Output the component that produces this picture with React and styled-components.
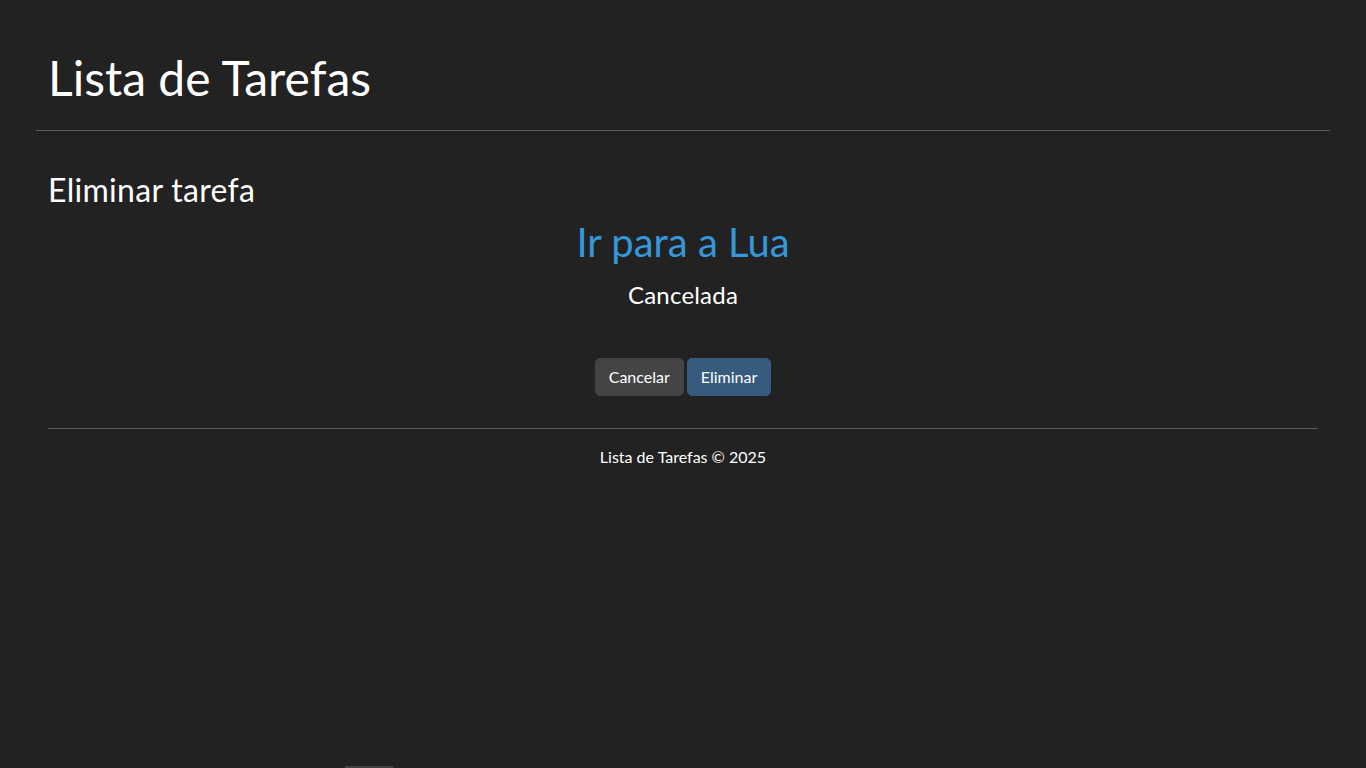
import React from 'react'
import styled, { createGlobalStyle } from 'styled-components'

const GlobalStyle = createGlobalStyle`
  html, body {
    margin: 0;
    padding: 0;
    background: #222222;
    color: #ffffff;
    font-family: Lato, "Liberation Sans", sans-serif;
    font-size: 16px;
    line-height: 1.5;
  }
  * { box-sizing: border-box; }
`

const Page = styled.div`
  min-height: 768px;
  padding: 0 36px;
`

const Header = styled.header`
  padding: 49px 12px 23px;
  border-bottom: 1px solid #5a5a5a;
`

const Title = styled.h1`
  margin: 0;
  font-size: 48px;
  font-weight: 400;
  line-height: 1.2;
`

const Main = styled.main`
  padding: 0 12px;
`

const SectionTitle = styled.h2`
  margin: 40px 0 0;
  font-size: 32px;
  font-weight: 400;
  line-height: 1.2;
  letter-spacing: 0.3px;
`

const Task = styled.div`
  text-align: center;
`

const TaskName = styled.h1`
  margin: 9px 0 0;
  font-size: 40px;
  font-weight: 400;
  line-height: 1.2;
  color: #3498db;
`

const TaskStatus = styled.h4`
  margin: 15px 0 0;
  font-size: 24px;
  font-weight: 400;
  line-height: 1.2;
  letter-spacing: 0.2px;
`

const Actions = styled.div`
  display: flex;
  justify-content: center;
  gap: 3px;
  margin-top: 48px;
`

const Button = styled.button`
  height: 38px;
  padding: 0 13px;
  border: 1px solid ${p => (p.$primary ? '#375a7f' : '#444444')};
  border-radius: 5px;
  background: ${p => (p.$primary ? '#375a7f' : '#444444')};
  color: #ffffff;
  font-family: inherit;
  font-size: 16px;
  cursor: pointer;
`

const Footer = styled.footer`
  margin-top: 32px;
  border-top: 1px solid #5a5a5a;
  padding-top: 16px;
  text-align: center;
  font-size: 16px;
`

const ScrollStub = styled.div`
  position: fixed;
  left: 345px;
  bottom: 0;
  width: 48px;
  height: 2px;
  background: #444444;
`

export default function App() {
  return (
    <Page>
      <GlobalStyle />
      <Header>
        <Title>Lista de Tarefas</Title>
      </Header>
      <Main>
        <SectionTitle>Eliminar tarefa</SectionTitle>
        <Task>
          <TaskName>Ir para a Lua</TaskName>
          <TaskStatus>Cancelada</TaskStatus>
          <Actions>
            <Button>Cancelar</Button>
            <Button $primary>Eliminar</Button>
          </Actions>
        </Task>
        <Footer>Lista de Tarefas © 2025</Footer>
      </Main>
      <ScrollStub />
    </Page>
  )
}
